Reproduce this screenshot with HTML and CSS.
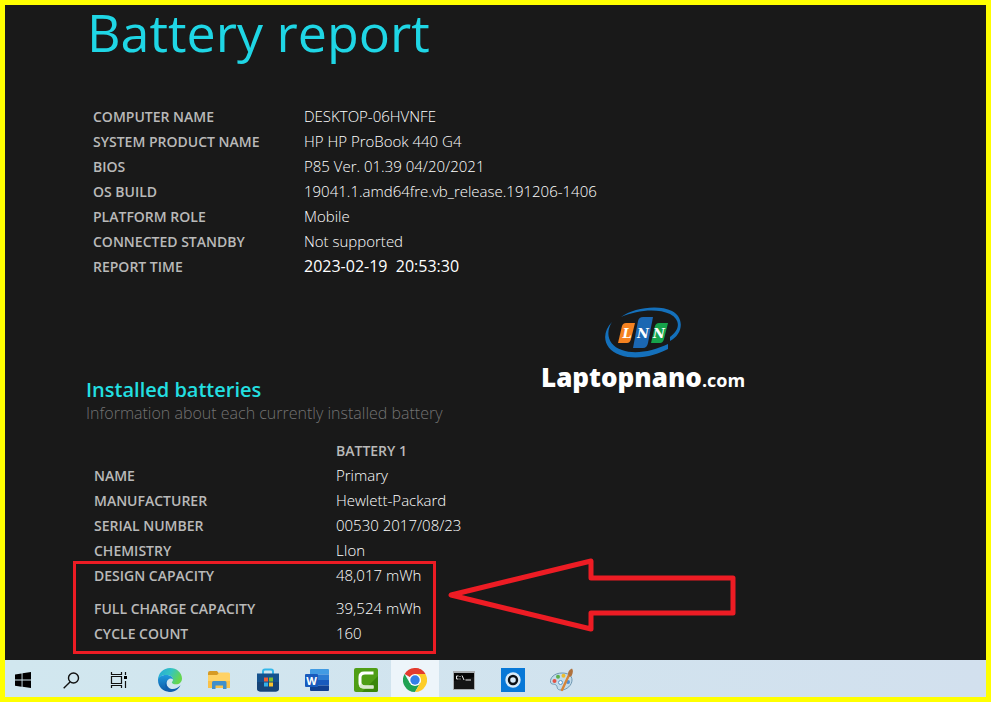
FILE: index.html
```html
<!DOCTYPE html>
<html lang="en">
<head>
<meta charset="utf-8">
<meta name="viewport" content="width=device-width, initial-scale=1">
<title>Battery report</title>
<link rel="stylesheet" href="styles.css">
</head>
<body>
<div class="frame">
  <main class="report">
    <h1 class="title">Battery report</h1>

    <table class="facts system">
      <tbody>
        <tr><th scope="row">COMPUTER NAME</th><td>DESKTOP-06HVNFE</td></tr>
        <tr><th scope="row">SYSTEM PRODUCT NAME</th><td>HP HP ProBook 440 G4</td></tr>
        <tr><th scope="row">BIOS</th><td>P85 Ver. 01.39 04/20/2021</td></tr>
        <tr><th scope="row">OS BUILD</th><td>19041.1.amd64fre.vb_release.191206-1406</td></tr>
        <tr><th scope="row">PLATFORM ROLE</th><td>Mobile</td></tr>
        <tr><th scope="row">CONNECTED STANDBY</th><td>Not supported</td></tr>
        <tr><th scope="row">REPORT TIME</th><td class="time">2023-02-19&nbsp; 20:53:30</td></tr>
      </tbody>
    </table>

    <section class="batteries">
      <h2 class="heading">Installed batteries</h2>
      <p class="note">Information about each currently installed battery</p>
      <table class="facts battery">
        <thead>
          <tr><td></td><th scope="col">BATTERY 1</th></tr>
        </thead>
        <tbody>
          <tr><th scope="row">NAME</th><td>Primary</td></tr>
          <tr><th scope="row">MANUFACTURER</th><td>Hewlett-Packard</td></tr>
          <tr><th scope="row">SERIAL NUMBER</th><td>00530 2017/08/23</td></tr>
          <tr><th scope="row">CHEMISTRY</th><td>LIon</td></tr>
          <tr class="design"><th scope="row">DESIGN CAPACITY</th><td>48,017 mWh</td></tr>
          <tr><th scope="row">FULL CHARGE CAPACITY</th><td>39,524 mWh</td></tr>
          <tr><th scope="row">CYCLE COUNT</th><td>160</td></tr>
        </tbody>
      </table>
      <div class="callout"></div>
      <svg class="arrow" width="290" height="76" viewBox="0 0 290 76" aria-hidden="true">
        <path d="M4 38 144 4V21H286V56H144V72Z" fill="none" stroke="#ed1c24" stroke-width="5" stroke-linejoin="round"/>
      </svg>
    </section>

    <div class="brand">
      <svg width="80" height="54" viewBox="0 0 80 54" role="img" aria-label="LNN">
        <path d="M18 12C30 3 55-1 69 6C82 13 80 29 67 36V32C77 25 78 15 67 9C54 3 34 5 18 12Z" fill="#1470bb"/>
        <path d="M9 17C-2 28 0 44 17 50C34 56 54 50 65 44V39C50 46 32 50 19 45C5 40 2 28 9 17Z" fill="#1470bb"/>
        <path d="M19 21Q20 18 23 18H32L28 34Q27 38 24 38H15Z" fill="#f58220"/>
        <path d="M35 16Q36 12 40 12H50L45 38Q44 43 40 43H30Z" fill="#1b67b2"/>
        <path d="M52 21Q53 18 56 18H65L61 34Q60 38 57 38H48Z" fill="#16a34a"/>
        <g class="mono"><text x="24" y="33">L</text><text x="40" y="33">N</text><text x="56" y="33">N</text></g>
      </svg>
      <div class="brand-name">Laptopnano<span>.com</span></div>
    </div>
  </main>

  <nav class="taskbar" aria-label="Taskbar">
    <div class="shell">
      <button type="button" aria-label="Start"><svg width="16" height="16" viewBox="0 0 16 16"><path d="M0 2.4 6.6 1.4V7.6H0ZM7.5 1.3 16 0V7.6H7.5ZM0 8.5H6.6V14.7L0 13.7ZM7.5 8.5H16V16L7.5 14.8Z"/></svg></button>
      <button type="button" aria-label="Search"><svg width="17" height="17" viewBox="0 0 17 17"><g fill="none" stroke="#111" stroke-width="1.4"><circle cx="10.5" cy="6" r="5"/><path d="M7 10 .7 16.3"/></g></svg></button>
      <button type="button" aria-label="Task view"><svg width="18" height="16" viewBox="0 0 18 16"><path d="M1.5 0V2.500H11.5V0M1.5 16V13.500H11.5V16M1.5 4.500H11.5V11.500H1.5ZM15.500 0V3M15.500 9V16" fill="none" stroke="#111" stroke-width="1.2"/><path d="M14 4h3v3h-3z"/></svg></button>
    </div>
    <div class="apps">
      <button type="button" aria-label="Edge"><svg width="24" height="24" viewBox="0 0 24 24">
        <defs>
          <linearGradient id="e1" x1="0" y1="0" x2="1" y2=".4"><stop stop-color="#22a6dc"/><stop offset=".55" stop-color="#35c4c0"/><stop offset="1" stop-color="#65d64f"/></linearGradient>
          <linearGradient id="e2" x1="0" y1="0" x2="0" y2="1"><stop stop-color="#1f9ade"/><stop offset="1" stop-color="#0c59a4"/></linearGradient>
        </defs>
        <path d="M0 12A12 12 0 0 1 12 0C19 0 24 5 24 10.500C24 14 21.500 16.300 18 16.300C15.500 16.300 13.800 15.300 13.800 14.500C13.800 14 15 13.400 15 11.800C15 9 12 7 8.500 7C4 7 1 9 0 12Z" fill="url(#e1)"/>
        <path d="M0 12C0 9.500 3.500 7 8 7C12 7 15 9 15 11.500C13 9.500 9 11 8.500 15C8.500 19 12 22.500 16 22.500C10 26 0 22 0 12Z" fill="url(#e2)"/>
        <path d="M9.500 11.500C6.500 15 9 20 13.500 21C17 21.500 20 20 22.500 17.300C20.500 21.500 16.500 24 12 24C8 23 5 17 9.500 11.500Z" fill="#0f5fae"/>
      </svg></button>
      <button type="button" aria-label="File Explorer"><svg width="22" height="19" viewBox="0 0 22 19"><path d="M0 2Q0 0 2 0H9L11 2.500 9 5H0Z" fill="#d69a24"/><path d="M0 4H9L11.500 1.500H20.500Q22 1.500 22 3V17H0Z" fill="#ffd264"/><path d="M0 10H22V17H0Z" fill="#f9c148"/><path d="M4 18V11.500Q4 10 5.500 10H17Q18.500 10 18.500 11.500V18H15V14.500H7.500V18Z" fill="#408fcb"/></svg></button>
      <button type="button" aria-label="Store"><svg width="24" height="24" viewBox="0 0 24 24"><path d="M7 7V3.500Q7 1.500 9 1.500H15Q17 1.500 17 3.500V7" fill="none" stroke="#33b7ea" stroke-width="2"/><path d="M1 5.500H23V20Q23 23.500 19.500 23.500H4.500Q1 23.500 1 20Z" fill="#15528e"/><path d="M1 14H23V20Q23 23.500 19.500 23.500H4.500Q1 23.500 1 20Z" fill="#164478"/><path d="M8 9.500h4v4h-4z" fill="#f15b37"/><path d="M13 9.500h4v4h-4z" fill="#7ebc30"/><path d="M8 14.500h4v4h-4z" fill="#35afe7"/><path d="M13 14.500h4v4h-4z" fill="#fbc32d"/></svg></button>
      <button type="button" aria-label="Word"><svg width="24" height="22" viewBox="0 0 24 22"><path d="M6 0H23Q24 0 24 1V5.500H5V1Q5 0 6 0Z" fill="#419be3"/><path d="M5 5.500H24V11H5Z" fill="#2b7cd3"/><path d="M5 11H24V16.500H5Z" fill="#185abd"/><path d="M5 16.500H24V21Q24 22 23 22H6Q5 22 5 21Z" fill="#103f91"/><rect y="5" width="13" height="13" rx="1" fill="#185abd"/><text class="word" x="6.500" y="15.500">W</text></svg></button>
      <button type="button" aria-label="Camtasia"><svg width="24" height="24" viewBox="0 0 24 24"><rect width="24" height="24" rx="2" fill="#4f9e15"/><path d="M24 8V22Q24 24 22 24H8Z" fill="#398709"/><path d="M19.500 3.500H10Q4.500 3.500 4.500 9V15Q4.500 20.500 10 20.500H19.500V17.500H11Q7.500 17.500 7.500 14.500V9.500Q7.500 6.500 11 6.500H19.500Z" fill="#fff"/><path d="M19.500 17.500V20.500H10Q6 20.500 5 17.500L7.800 15.500Q8.500 17.500 11 17.500Z" fill="#dbe9cf"/></svg></button>
      <button type="button" class="active" aria-label="Chrome"><svg width="24" height="24" viewBox="0 0 24 24"><path d="M12 12 1.600 6A12 12 0 0 1 22.400 6Z" fill="#e33b2e"/><path d="M1.600 6A12 12 0 0 0 12 24L17.200 15 12 12 6.800 15Z" fill="#1fa253"/><path d="M22.400 6A12 12 0 0 1 12 24L17.200 15A6 6 0 0 0 12 6Z" fill="#fdcd28"/><path d="M12 6H22.400L17 12Z" fill="#fdcd28"/><path d="M12 6H22.400A12 12 0 0 0 12 0Z" fill="#e33b2e"/><circle cx="12" cy="12" r="6" fill="#fff"/><circle cx="12" cy="12" r="4.700" fill="#347fe8"/></svg></button>
      <button type="button" aria-label="Command Prompt"><svg width="22" height="19" viewBox="0 0 22 19"><rect width="22" height="19" fill="#a9adb0"/><rect x="1" y="2" width="20" height="16" fill="#050505"/><path d="M1 10 21 6V18H1Z" fill="#151515"/><path d="M5.500 5H3.500V8H5.500M7 5V6M7 7.500V8.500M9 4.500 11 9M12.500 9H18" fill="none" stroke="#e8e8e8"/></svg></button>
      <button type="button" aria-label="Media player"><svg width="24" height="24" viewBox="0 0 24 24"><rect width="24" height="24" fill="#0878d7"/><circle cx="12" cy="12" r="7.700" fill="#d8ebf9"/><circle cx="12" cy="12" r="4" fill="#d8ebf9" stroke="#0b1016" stroke-width="2.400"/></svg></button>
      <button type="button" aria-label="Paint"><svg width="24" height="24" viewBox="0 0 24 24"><path d="M12 5C4 5 0 10 .500 14C1 17 4 15.500 6 17C8 18.500 6 22 11 22C17 22 22 17 22 12C22 7.500 18 5 12 5Z" fill="#c3dceb" stroke="#7098b1"/><circle cx="4.500" cy="13" r="2" fill="#e25345"/><circle cx="8" cy="8.800" r="2" fill="#5caf4c"/><circle cx="13.500" cy="7.800" r="2" fill="#edbd2e"/><circle cx="10.500" cy="14.500" r="2" fill="#f4f8fa" stroke="#5998c8"/><circle cx="18" cy="14" r="2" fill="#4f8fd0"/><path d="M19 7 12 22" stroke="#d78538" stroke-width="2.400" stroke-linecap="round"/><path d="M18 6Q18 2 22 .500Q24 3 21.500 8L19.500 9Z" fill="#b0713b"/></svg></button>
    </div>
  </nav>
</div>
</body>
</html>
```
FILE: styles.css
```css
* {
  box-sizing: border-box;
}

body {
  margin: 0;
  background: #191919;
  color: #fff;
  font-family: "Segoe UI", "Open Sans", "Noto Sans", sans-serif;
}

.frame {
  display: flex;
  flex-direction: column;
  min-height: 100vh;
  border: 5px solid #ff0;
}

.report {
  position: relative;
  flex: 1;
  padding-left: 81px;
}

.title {
  margin: -8px 0 0;
  padding-left: 1px;
  color: #1fd6e5;
  font-size: 52px;
  font-weight: 500;
  line-height: 70px;
}

.facts {
  border-collapse: collapse;
  font-size: 15px;
  line-height: 25px;
  white-space: nowrap;
}

.facts th,
.facts td {
  padding: 0;
  text-align: left;
}

.facts th {
  color: #b9b9b9;
  font-size: 14px;
  font-weight: 600;
}

.facts td {
  font-weight: 300;
}

.system {
  margin: 37px 0 0 7px;
}

.system th {
  width: 211px;
}

.facts .time {
  font-size: 16px;
  font-weight: 400;
}

.batteries {
  position: relative;
  margin-top: 98px;
}

.heading {
  margin: 0;
  color: #23dfe0;
  font-size: 20px;
  font-weight: 600;
  line-height: 25px;
}

.note {
  margin: 0;
  color: #737373;
  font-size: 16px;
  font-weight: 300;
  line-height: 23px;
}

.battery {
  margin: 14px 0 0 8px;
}

.battery thead {
  line-height: 24px;
}

.battery tbody th {
  width: 242px;
}

.design th,
.design td {
  padding-bottom: 8px;
}

.callout {
  position: absolute;
  top: 184px;
  left: -13px;
  width: 363px;
  height: 93px;
  border: 3px solid #ed1c24;
}

.arrow {
  position: absolute;
  top: 180px;
  left: 361px;
}

.brand {
  position: absolute;
  top: 300px;
  left: 536px;
  display: flex;
  flex-direction: column;
}

.brand svg {
  margin-left: 62px;
}

.mono {
  fill: #fff;
  font: italic 700 13px "DejaVu Serif", serif;
  text-anchor: middle;
}

.brand-name {
  color: #fff;
  font-size: 26px;
  font-weight: 800;
  line-height: 36px;
}

.brand-name span {
  font-size: 18px;
  font-weight: 700;
}

.taskbar {
  display: flex;
  gap: 9px;
  height: 37px;
  background: linear-gradient(90deg, #d1e7ef, #d2e0ee);
}

.shell,
.apps {
  display: flex;
}

.shell {
  gap: 12px;
}

.apps {
  gap: 1px;
}

.taskbar button {
  display: grid;
  place-items: center;
  width: 48px;
  padding: 3px 0 0;
  border: 0;
  background: none;
}

.shell button {
  width: 36px;
}

.taskbar .active {
  background: #edf5fa;
}

.word {
  fill: #fff;
  font: 700 11px "Open Sans", sans-serif;
  text-anchor: middle;
}
```
